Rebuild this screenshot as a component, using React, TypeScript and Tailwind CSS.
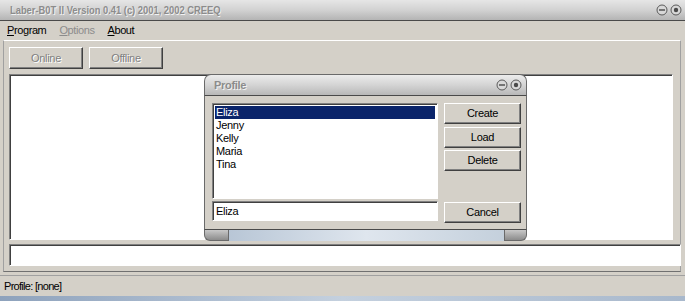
import React from 'react';

const font = { fontFamily: '"Liberation Sans", Arial, sans-serif' };

function TitleButtons() {
  return (
    <div className="flex items-center gap-[2px]">
      <svg width="12" height="12" viewBox="0 0 12 12">
        <circle cx="6" cy="6" r="5" fill="#d8d8d8" stroke="#5a5a5a" strokeWidth="1" />
        <line x1="3" y1="6" x2="9" y2="6" stroke="#4a4a4a" strokeWidth="1.4" />
      </svg>
      <svg width="12" height="12" viewBox="0 0 12 12">
        <circle cx="6" cy="6" r="5" fill="#d8d8d8" stroke="#5a5a5a" strokeWidth="1" />
        <circle cx="6" cy="6" r="2.2" fill="#4a4a4a" />
      </svg>
    </div>
  );
}

function Btn({ label, disabled }: { label: string; disabled?: boolean }) {
  return (
    <div className="h-full w-full flex items-center justify-center bg-[#d4d0c8] border border-t-white border-l-white border-r-[#404040] border-b-[#404040] shadow-[inset_-1px_-1px_0_#808080] text-[11px] tracking-[-0.3px]">
      <span className={disabled ? 'text-[#808080] [text-shadow:1px_1px_0_#ffffff]' : 'text-black'}>{label}</span>
    </div>
  );
}

const sunken =
  'bg-white border border-t-[#808080] border-l-[#808080] border-r-white border-b-white shadow-[inset_1px_1px_0_#404040]';

export default function App() {
  const names = ['Eliza', 'Jenny', 'Kelly', 'Maria', 'Tina'];
  return (
    <div className="relative w-[685px] h-[301px] overflow-hidden bg-[#d4d0c8] flex flex-col" style={font}>
      {/* window title */}
      <div className="h-[21px] shrink-0 flex items-center justify-between pl-[10px] pr-[3px] bg-gradient-to-b from-[#e6e6e6] via-[#d2d2d2] to-[#b4b4b4] border-b border-[#4a4a4a]">
        <span className="inline-block origin-left scale-x-[0.85] whitespace-nowrap text-[11px] font-bold text-[#8c8c8c] [text-shadow:1px_1px_0_#f2f2f2]">
          Laber-B0T II Version 0.41 (c) 2001, 2002 CREEQ
        </span>
        <TitleButtons />
      </div>

      {/* menu */}
      <div className="h-[19px] shrink-0 flex items-center gap-[13px] pl-[7px] text-[11px] tracking-[-0.4px] text-black">
        <span><u>P</u>rogram</span>
        <span className="text-[#8c8c8c]"><u>O</u>ptions</span>
        <span><u>A</u>bout</span>
      </div>

      {/* client panel */}
      <div className="shrink-0 flex flex-col mr-[4px] ml-[3px] border-t border-t-white border-r border-r-[#a0a0a0] border-b border-b-[#707070] border-l border-l-[#a0a0a0] pl-[5px] pt-[6px] pb-[5px]">
        <div className="flex gap-[6px] h-[22px]">
          <div className="w-[74px]"><Btn label="Online" disabled /></div>
          <div className="w-[74px]"><Btn label="Offline" disabled /></div>
        </div>
        <div className={`mt-[5px] h-[166px] w-[664px] ${sunken}`} />
        <div className={`mt-[4px] h-[22px] w-[672px] ${sunken}`} />
      </div>

      {/* status */}
      <div className="shrink-0 h-[21px] mt-[3px] flex items-center pl-[4px] text-[11px] tracking-[-0.7px] text-black border-t border-[#a0a0a0]">
        Profile: [none]
      </div>
      <div className="flex-1 bg-gradient-to-r from-[#8ea2bc] via-[#c4d0de] to-[#a8b8cc]" />

      {/* Profile dialog */}
      <div className="absolute left-[204px] top-[74px] w-[323px] h-[167px] flex flex-col">
        <div className="h-[22px] shrink-0 flex items-center justify-between pl-[9px] pr-[4px] rounded-t-[7px] bg-gradient-to-b from-[#ececec] via-[#d4d4d4] to-[#b8b8b8] border border-[#6a6a6a] border-b-[#4a4a4a]">
          <span className="text-[11px] font-bold tracking-[-0.3px] text-[#8c8c8c] [text-shadow:1px_1px_0_#f2f2f2]">
            Profile
          </span>
          <TitleButtons />
        </div>
        <div className="flex gap-[6px] pl-[7px] pt-[7px] pb-[6px] bg-[#d4d0c8] border-l border-r border-[#6a6a6a] border-b border-b-[#4a4a4a]">
          <div className="w-[226px] flex flex-col gap-[2px]">
            <div className={`h-[96px] pt-[2px] pl-[2px] pr-[2px] text-[11px] tracking-[-0.3px] leading-[13px] ${sunken}`}>
              {names.map((n, i) => (
                <div key={n} className={i === 0 ? 'bg-[#0a246a] text-white pl-[1px]' : 'text-black pl-[1px]'}>{n}</div>
              ))}
            </div>
            <div className={`h-[20px] flex items-center pl-[3px] text-[11px] tracking-[-0.3px] text-black ${sunken}`}>Eliza</div>
          </div>
          <div className="w-[77px] flex flex-col">
            <div className="h-[21px]"><Btn label="Create" /></div>
            <div className="h-[21px] mt-[3px]"><Btn label="Load" /></div>
            <div className="h-[21px] mt-[2px]"><Btn label="Delete" /></div>
            <div className="h-[21px] mt-[31px]"><Btn label="Cancel" /></div>
          </div>
        </div>
        <div className="flex-1 flex">
          <div className="w-[24px] rounded-bl-[6px] bg-gradient-to-b from-[#c8c8c8] to-[#8c8c8c] border-l border-b border-[#6a6a6a]" />
          <div className="flex-1 bg-gradient-to-r from-[#b8c6d6] via-[#dfe6ee] to-[#c4d0dc] border-l border-r border-[#6a6a6a]" />
          <div className="w-[22px] rounded-br-[6px] bg-gradient-to-b from-[#c8c8c8] to-[#8c8c8c] border-r border-b border-[#6a6a6a]" />
        </div>
      </div>
    </div>
  );
}
